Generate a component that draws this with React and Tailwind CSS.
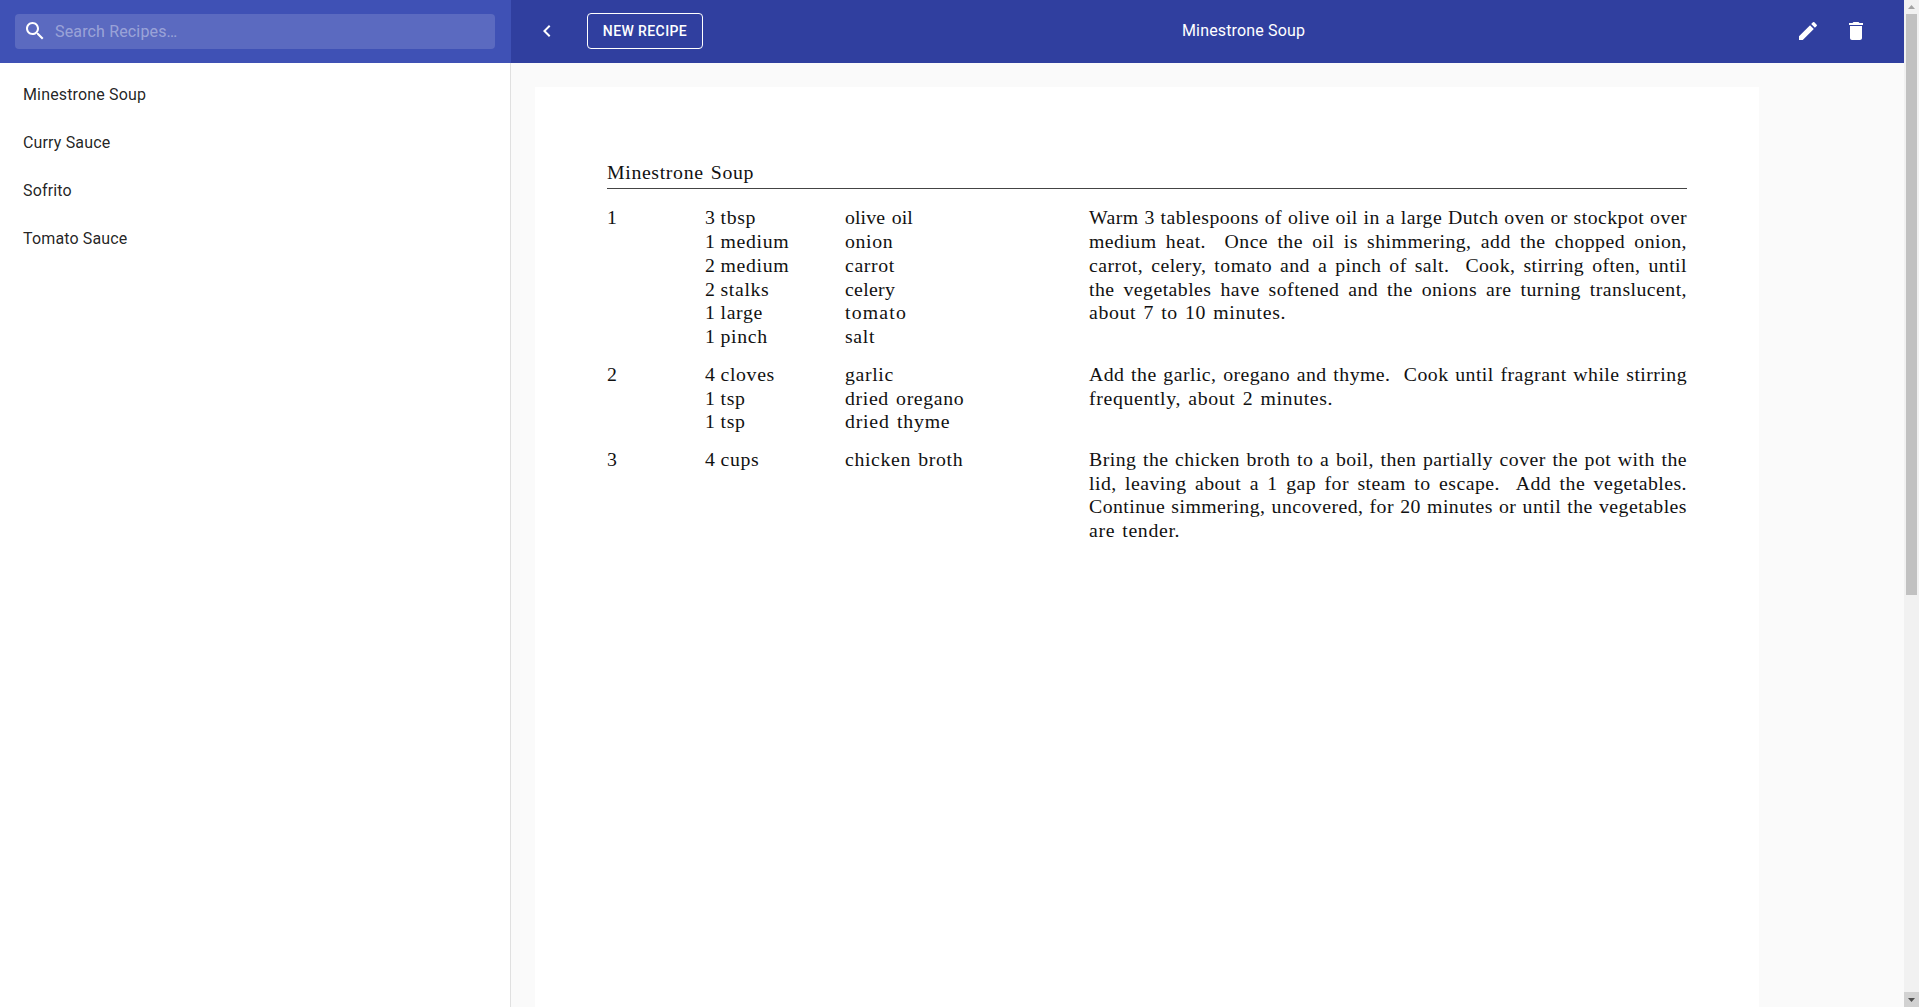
const recipes = ["Minestrone Soup", "Curry Sauce", "Sofrito", "Tomato Sauce"];

const steps = [
  {
    ingredients: [
      ["3", "tbsp", "olive oil", "tracking-[0.1px]"],
      ["1", "medium", "onion"],
      ["2", "medium", "carrot"],
      ["2", "stalks", "celery", "tracking-[0.3px]"],
      ["1", "large", "tomato", "tracking-[1.2px]"],
      ["1", "pinch", "salt"],
    ],
    lines: [
      "Warm 3 tablespoons of olive oil in a large Dutch oven or stockpot over",
      "medium heat.  Once the oil is shimmering, add the chopped onion,",
      "carrot, celery, tomato and a pinch of salt.  Cook, stirring often, until",
      "the vegetables have softened and the onions are turning translucent,",
      "about 7 to 10 minutes.",
    ],
  },
  {
    ingredients: [
      ["4", "cloves", "garlic"],
      ["1", "tsp", "dried oregano"],
      ["1", "tsp", "dried thyme", "tracking-[0.8px]"],
    ],
    lines: [
      "Add the garlic, oregano and thyme.  Cook until fragrant while stirring",
      "frequently, about 2 minutes.",
    ],
  },
  {
    ingredients: [["4", "cups", "chicken broth"]],
    lines: [
      "Bring the chicken broth to a boil, then partially cover the pot with the",
      "lid, leaving about a 1 gap for steam to escape.  Add the vegetables.",
      "Continue simmering, uncovered, for 20 minutes or until the vegetables",
      "are tender.",
    ],
  },
];

function Icon({ d, className = "" }) {
  return (
    <svg viewBox="0 0 24 24" className={"size-6 shrink-0 fill-current " + className}>
      <path d={d} />
    </svg>
  );
}

function Sidebar() {
  return (
    <aside className="flex w-[511px] shrink-0 flex-col">
      <div className="flex h-[63px] shrink-0 items-center bg-[#3f51b5] pr-4 pl-[15px] text-white">
        <div className="flex h-[35px] flex-1 items-start rounded bg-white/15 pt-[5px] pl-2">
          <Icon d="M15.5 14h-.79l-.28-.27C15.41 12.59 16 11.11 16 9.5 16 5.91 13.09 3 9.5 3S3 5.91 3 9.5 5.91 16 9.5 16c1.61 0 3.09-.59 4.23-1.57l.27.28v.79l5 4.99L20.49 19l-4.99-5zm-6 0C7.01 14 5 11.99 5 9.5S7.01 5 9.5 5 14 7.01 14 9.5 11.99 14 9.5 14z" />
          <span className="ml-2 pt-px text-white/40">Search Recipes…</span>
        </div>
      </div>
      <nav className="flex-1 border-r border-[#e0e0e0] bg-white pt-2">
        {recipes.map((name) => (
          <div key={name} className="flex h-12 items-center pl-[23px] text-black/87">
            {name}
          </div>
        ))}
      </nav>
    </aside>
  );
}

function Toolbar() {
  return (
    <header className="flex h-[63px] shrink-0 items-start bg-[#303f9f] pt-[13px] pr-9 pl-6 text-white">
      <Icon className="mt-1.5" d="M15.41 7.41L14 6l-6 6 6 6 1.41-1.41L10.83 12z" />
      <button className="ml-7 flex h-9 w-[116px] items-center justify-center rounded border border-white text-sm font-medium tracking-[0.4px]">
        NEW RECIPE
      </button>
      <h1 className="flex-1 pt-1.5 pl-[479px]">Minestrone Soup</h1>
      <Icon
        className="mt-1.5"
        d="M3 17.25V21h3.75L17.81 9.94l-3.75-3.75L3 17.25zM20.71 7.04c.39-.39.39-1.02 0-1.41l-2.34-2.34a.9959.9959 0 0 0-1.41 0l-1.83 1.83 3.75 3.75 1.83-1.83z"
      />
      <Icon
        className="mt-1.5 ml-6"
        d="M6 19c0 1.1.9 2 2 2h8c1.1 0 2-.9 2-2V7H6v12zM19 4h-3.5l-1-1h-5l-1 1H5v2h14V4z"
      />
    </header>
  );
}

function Step({ number, step }) {
  return (
    <section className="mb-[13.6px] grid grid-cols-[98px_384px_598px]">
      <div>{number}</div>
      <div>
        {step.ingredients.map(([amount, unit, name, tracking = ""]) => (
          <div key={name} className="grid grid-cols-[15.5px_124.5px_1fr]">
            <span>{amount}</span>
            <span>{unit}</span>
            <span className={tracking}>{name}</span>
          </div>
        ))}
      </div>
      <div>
        {step.lines.map((line, i) => (
          <p
            key={line}
            className={
              i === step.lines.length - 1
                ? "whitespace-pre"
                : "whitespace-pre-wrap tracking-[0.45px] [text-align-last:justify] [word-spacing:0]"
            }
          >
            {line}
          </p>
        ))}
      </div>
    </section>
  );
}

function Recipe() {
  return (
    <article className="w-[1224px] flex-1 bg-white px-[72px] pt-[74px] font-['Liberation_Serif',serif] text-[19.8px] leading-[23.85px] tracking-[0.65px] text-[#111] [word-spacing:1.6px]">
      <h2 className="h-[28px] border-b border-[#444]">Minestrone Soup</h2>
      <div className="pt-[17px]">
        {steps.map((step, i) => (
          <Step key={i} number={i + 1} step={step} />
        ))}
      </div>
    </article>
  );
}

function Scrollbar() {
  return (
    <div className="flex w-[15px] shrink-0 flex-col items-center bg-[#f1f1f1]">
      <div className="flex h-3.5 items-center">
        <svg viewBox="0 0 7 4" className="h-1 w-[7px] fill-[#a3a3a3]">
          <path d="M0 4L3.5 0L7 4z" />
        </svg>
      </div>
      <div className="h-[581px] w-[11px] bg-[#c1c1c1]" />
      <div className="mt-auto flex h-[15px] w-full items-center justify-center bg-[#d2d2d2]">
        <svg viewBox="0 0 7 4" className="h-1 w-[7px] fill-[#505050]">
          <path d="M0 0L3.5 4L7 0z" />
        </svg>
      </div>
    </div>
  );
}

export default function App() {
  return (
    <div className="flex h-screen w-full overflow-hidden bg-[#fafafa] font-[Roboto,sans-serif] text-base tracking-[0.15px]">
      <Sidebar />
      <div className="flex min-w-0 flex-1 flex-col">
        <Toolbar />
        <main className="flex flex-1 flex-col pt-6 pl-6">
          <Recipe />
        </main>
      </div>
      <Scrollbar />
    </div>
  );
}
